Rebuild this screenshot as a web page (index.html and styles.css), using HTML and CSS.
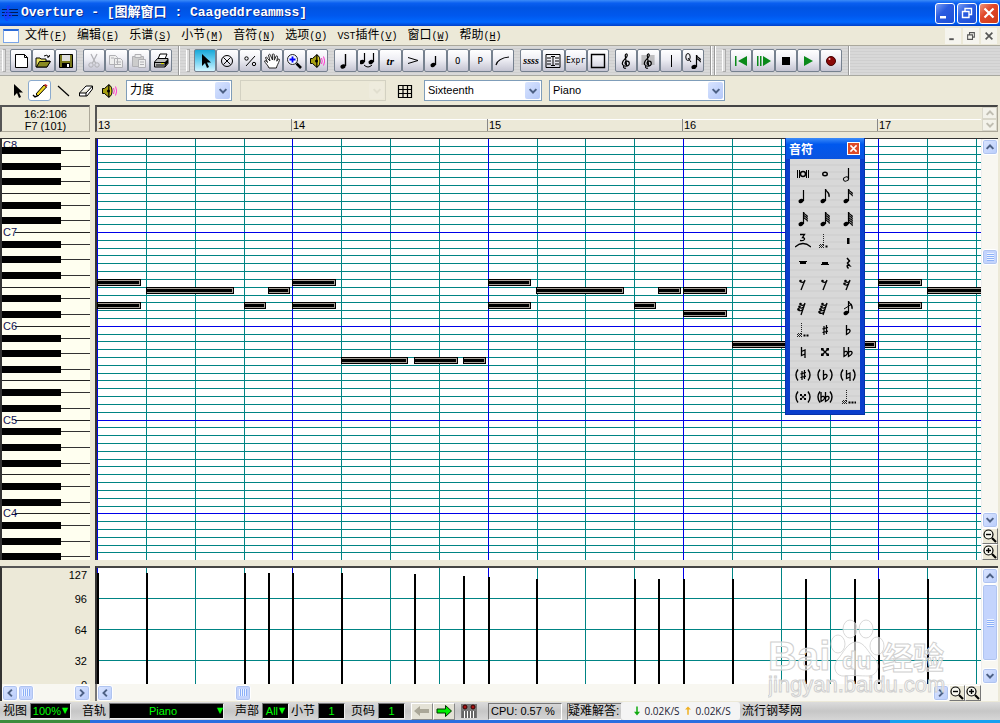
FILE: index.html
```html
<!DOCTYPE html>
<html lang="zh-CN">
	<head>
		<meta charset="utf-8">
		<title>Overture - [图解窗口 : Caageddreammss]</title>
		<link rel="stylesheet" href="styles.css">
	</head>
	<body>
		<header class="titlebar">
			<span class="icon" data-icon="app"></span>
			<h1>Overture - [图解窗口 : Caageddreammss]</h1>
			<button class="win" aria-label="最小化" data-icon="min"></button>
			<button class="win" aria-label="还原" data-icon="restore"></button>
			<button class="win close" aria-label="关闭" data-icon="close"></button>
		</header>

		<nav class="menubar">
			<span class="doc"></span>
			<a href="#">文件<span>(<u>F</u>)</span></a>
			<a href="#">编辑<span>(<u>E</u>)</span></a>
			<a href="#">乐谱<span>(<u>S</u>)</span></a>
			<a href="#">小节<span>(<u>M</u>)</span></a>
			<a href="#">音符<span>(<u>N</u>)</span></a>
			<a href="#">选项<span>(<u>O</u>)</span></a>
			<a href="#"><span>VST</span>插件<span>(<u>V</u>)</span></a>
			<a href="#">窗口<span>(<u>W</u>)</span></a>
			<a href="#">帮助<span>(<u>H</u>)</span></a>
			<div class="mdi">
				<button aria-label="最小化" data-icon="min"></button>
				<button aria-label="还原" data-icon="restore"></button>
				<button aria-label="关闭" data-icon="close"></button>
			</div>
		</nav>

		<div class="toolbar">
			<i class="grip"></i>
			<div class="group g3">
				<button data-icon="new"></button><button data-icon="open"></button><button data-icon="save"></button>
			</div>
			<div class="group g4">
				<button data-icon="cut" disabled></button><button data-icon="copy" disabled></button><button data-icon="paste" disabled></button><button data-icon="print"></button>
			</div>
			<i class="sep"></i>
			<i class="grip"></i>
			<div class="group g6">
				<button class="on" data-icon="arrow"></button><button data-icon="cross"></button><button data-icon="percent"></button><button data-icon="hand"></button><button data-icon="zoomblue"></button><button data-icon="speaker"></button>
			</div>
			<div class="group g8">
				<button data-icon="bignote"></button><button data-icon="tie"></button><button class="trill">tr</button><button data-icon="accent"></button><button data-icon="note"></button><button class="pix">O</button><button class="pix">P</button><button data-icon="slur"></button>
			</div>
			<div class="group g4">
				<button class="trill small">ssss</button><button data-icon="staff"></button><button class="pix tight">Expr</button><button data-icon="box"></button>
			</div>
			<div class="group g4">
				<button data-icon="clef"></button><button data-icon="clefgrid"></button><button data-icon="bar"></button><button data-icon="quant"></button>
			</div>
			<i class="sep"></i>
			<i class="sep"></i>
			<i class="grip"></i>
			<div class="group g5">
				<button data-icon="rewind"></button><button data-icon="stepplay"></button><button data-icon="stop"></button><button data-icon="play"></button><button data-icon="record"></button>
			</div>
			<i class="sep"></i>
		</div>

		<div class="tools">
			<button data-icon="arrow"></button>
			<button class="on" data-icon="pencil"></button>
			<button data-icon="line"></button>
			<button data-icon="eraser"></button>
			<button data-icon="speaker"></button>
			<label class="combo velocity"><select aria-label="参数"><option>力度</option></select><b data-icon="down"></b></label>
			<label class="combo empty"><select aria-label="控制器" disabled><option></option></select><b data-icon="down"></b></label>
			<button class="gridbtn" data-icon="grid"></button>
			<label class="combo snap"><select aria-label="网格"><option>Sixteenth</option></select><b data-icon="down"></b></label>
			<label class="combo track"><select aria-label="音轨"><option>Piano</option></select><b data-icon="down"></b></label>
		</div>

		<div class="row ruler">
			<div class="position">16:2:106<br>F7 (101)</div>
			<div class="measures">
				<svg id="ruler"></svg>
				<div class="spin"><button data-icon="up" disabled></button><button data-icon="down" disabled></button></div>
			</div>
		</div>

		<main class="row roll">
			<div class="keys"><svg id="keys"></svg></div>
			<div class="view">
				<svg id="notes"></svg>
				<div class="vscroll">
					<button data-icon="up"></button>
					<i class="thumb mid"></i>
					<button class="last" data-icon="down"></button>
					<button class="zoom" data-icon="zoomout"></button>
					<button class="zoom" data-icon="zoomin"></button>
				</div>
			</div>
			<section class="palette">
				<header><h2>音符</h2><button aria-label="关闭" data-icon="close"></button></header>
				<div class="symbols" id="symbols"></div>
			</section>
		</main>

		<div class="row velo">
			<div class="scale">
				<svg id="scale"></svg>
				<div class="hscroll">
					<button data-icon="left"></button>
					<i class="thumb"></i>
					<button class="last" data-icon="right"></button>
				</div>
			</div>
			<div class="lower">
				<div class="view">
					<svg id="velocity"></svg>
					<div class="vscroll">
						<button data-icon="up"></button>
						<i class="thumb tall"></i>
						<button class="last" data-icon="down"></button>
					</div>
				</div>
				<div class="hscroll">
					<button data-icon="left"></button>
					<i class="thumb mid"></i>
					<button class="last" data-icon="right"></button>
					<button class="zoom" data-icon="zoomout"></button>
					<button class="zoom" data-icon="zoomin"></button>
				</div>
			</div>
			<svg class="watermark" viewBox="0 0 184 90">
				<g>
					<ellipse cx="70" cy="29" rx="7" ry="9"/>
					<ellipse cx="82" cy="14" rx="7" ry="9"/>
					<ellipse cx="98" cy="14" rx="7" ry="9"/>
					<ellipse cx="109" cy="31" rx="7" ry="9"/>
					<path d="M88 27c9 0 12 11 19 17c6 7 2 17-7 17c-6 0-18-1-23 0c-9 1-13-8-8-16c6-6 10-18 19-18z"/>
				</g>
				<text class="logo" x="0" y="55">Bai</text>
				<text class="du" x="74" y="54">du</text>
				<text class="cn" x="114" y="54">经验</text>
				<text class="url" x="0" y="77">jingyan.baidu.com</text>
			</svg>
		</div>

		<footer class="status">
			<span class="name">视图</span>
			<button class="lcd w40">100%<b>▼</b></button>
			<span class="name pad">音轨</span>
			<button class="lcd w114"><span>Piano</span><b>▼</b></button>
			<span class="name pad">声部</span>
			<button class="lcd w26">All<b>▼</b></button>
			<span class="name">小节</span>
			<output class="lcd w26">1</output>
			<span class="name">页码</span>
			<output class="lcd w26">1</output>
			<button class="nav" data-icon="prev" disabled></button>
			<button class="nav" data-icon="next"></button>
			<span class="midi" data-icon="midi"></span>
			<span class="cell cpu">CPU: 0.57 %</span>
			<span class="cell help">疑难解答:</span>
			<span class="net"><i data-icon="netdown"></i>0.02K/S<i data-icon="netup"></i>0.02K/S</span>
			<span class="site">流行钢琴网</span>
		</footer>
		<div class="taskbar"></div>
		<script src="main.js"></script>
	</body>
</html>
```

FILE: styles.css
```css
*{
	box-sizing: border-box;
}
body{
	margin: 0;
	height: 100vh;
	overflow: hidden;
	display: flex;
	flex-direction: column;
	background: #ece9d8;
	color: #000;
	font: 11px/13px "Liberation Sans", "Noto Sans CJK SC", sans-serif;
}
button{
	display: flex;
	align-items: center;
	justify-content: center;
	margin: 0;
	padding: 0;
	border: 0;
	background: none;
	color: inherit;
	font: inherit;
}
svg{
	display: block;
	flex: none;
}

/* title and menu */
.titlebar{
	height: 26px;
	flex: none;
	display: flex;
	align-items: center;
	padding: 0 1px 0 2px;
	gap: 2px;
	background: linear-gradient(#3c8cf8 0, #0a5ff0 12%, #0054e3 30%, #0058ee 60%, #0068ff 85%, #003fc8 100%);
}
.titlebar h1{
	flex: 1;
	margin: 0 0 0 1px;
	color: #fff;
	font: bold 13px/20px "Liberation Mono", "Noto Sans CJK SC", monospace;
	text-shadow: 1px 1px 0 #0a2a90;
	white-space: pre;
}
.win{
	width: 20px;
	height: 21px;
	border: 1px solid #fff;
	border-radius: 3px;
	color: #fff;
	background: linear-gradient(135deg, #7a9df4, #2a5ce0 40%, #1c4ed6);
}
.win.close{
	background: linear-gradient(135deg, #f0957a, #e0482a 40%, #cf3a18);
}
.menubar{
	height: 19px;
	flex: none;
	display: flex;
	align-items: center;
	gap: 10px;
	padding: 0 3px;
}
.menubar a{
	color: #000;
	text-decoration: none;
	font: 12px/18px "Noto Sans CJK SC", sans-serif;
	white-space: nowrap;
}
.menubar a span{
	font: 10px/18px "Liberation Mono", monospace;
}
.doc{
	width: 16px;
	height: 14px;
	margin-right: -4px;
	background: #fff;
	border: 1px solid #7aa5e8;
	border-top: 2px solid #2a6ad8;
}
.mdi{
	margin-left: auto;
	display: flex;
	gap: 2px;
}
.mdi button{
	width: 16px;
	height: 16px;
	color: #555;
	background: #f5f4ee;
}

/* main toolbar */
.toolbar{
	height: 31px;
	flex: none;
	display: flex;
	align-items: center;
	padding: 0 4px 0 2px;
	border-top: 1px solid #aaa89c;
	border-bottom: 1px solid #a8a8a0;
	background: repeating-linear-gradient(#d8d8d8 0 2px, #cfcfcf 2px 3px);
}
.grip{
	width: 4px;
	height: 23px;
	margin-right: 4px;
	border: 1px solid #aaa;
	border-left-color: #fff;
	background: #ddd;
}
.sep{
	width: 2px;
	height: 29px;
	margin: 0 2px 0 0;
	border-left: 1px solid #999;
	background: #fff;
}
.sep + .grip{
	margin-left: 4px;
}
.group{
	height: 23px;
	flex: none;
	display: flex;
	margin-right: 6px;
}
.group button{
	flex: 1;
	min-width: 0;
	border: 1px solid #76818f;
	border-radius: 2px;
	background: linear-gradient(#fff, #eeeef4 45%, #c4c4d2);
}
.group button.on{
	background: linear-gradient(#18a8d8, #6cd0f0 50%, #d0f4ff);
}
.group button:disabled{
	color: #b0b0b4;
}
.g3{ width: 67px; }
.g4{ width: 89px; }
.g5{ width: 112px; }
.g6{ width: 134px; }
.g8{ width: 180px; }
.group .trill{
	font: italic bold 11px/12px "Liberation Serif", serif;
}
.group .small{
	font-size: 10px;
}
.group .pix{
	font: 9px/12px "DejaVu Sans Mono", monospace;
}
.group .tight{
	font: 8px/12px "DejaVu Sans Mono", monospace;
}

/* drawing tools */
.tools{
	height: 29px;
	flex: none;
	display: flex;
	align-items: center;
	padding-left: 5px;
}
.tools button{
	width: 23px;
	height: 21px;
}
.tools button.on{
	border: 1px solid #8aaace;
	border-radius: 3px;
	background: #fff;
}
.combo{
	display: grid;
	height: 21px;
	margin-left: 8px;
}
.combo select{
	grid-area: 1 / 1;
	appearance: none;
	border: 1px solid #7f9db9;
	border-radius: 0;
	background: #fff;
	color: #000;
	padding: 0 3px;
	font: 11px/17px "Liberation Sans", "Noto Sans CJK SC", sans-serif;
}
.combo b{
	grid-area: 1 / 1;
	justify-self: end;
	align-self: center;
	width: 15px;
	height: 17px;
	margin-right: 2px;
	display: flex;
	align-items: center;
	justify-content: center;
	color: #4d6185;
	background: linear-gradient(135deg, #d8e4ff, #b4c8f8);
	border-radius: 2px;
	pointer-events: none;
}
.velocity{
	width: 106px;
	margin-left: 6px;
}
.velocity select{ font-size: 12px; }
.empty{ width: 146px; }
.snap{ width: 118px; }
.track{
	width: 176px;
	margin-left: 7px;
}
.combo select:disabled{
	background: #ece9d8;
	border-color: #c9c7ba;
}
.empty b{
	color: #c9c7ba;
	background: #f3f2ea;
}
.tools .gridbtn{
	margin: 0 0 0 7px;
}

/* panes */
.row{
	flex: none;
	display: grid;
	grid-template: minmax(0, 1fr) / 90px minmax(0, 1fr);
	gap: 5px;
	padding-right: 2px;
	margin-bottom: 6px;
}
.row text{
	font: 11px "Liberation Sans", sans-serif;
}
.ruler{
	height: 27px;
}
.position{
	padding: 1px 0;
	border: 1px solid #aca899;
	border-top: 2px solid #555;
	border-left: 2px solid #555;
	text-align: center;
	line-height: 12px;
}
.measures{
	display: flex;
	border: 1px solid #aca899;
	border-top: 2px solid #444;
	border-left: 2px solid #555;
}
.measures svg#ruler{
	flex: 1;
	min-width: 0;
	height: 24px;
}
.spin button{
	width: 15px;
	height: 12px;
	color: #c0beb2;
	background: #f3f2ea;
	border: 1px solid #d9d7ca;
}
.roll{
	flex: 1;
	min-height: 0;
	position: relative;
}
.keys, .view{
	min-height: 0;
	overflow: hidden;
	border-left: 2px solid #333;
	border-top: 1px solid #333;
}
.keys{
	background: #fffff0;
}
.view{
	display: flex;
	background: #fff;
}
.view > svg{
	flex: 1;
	min-width: 0;
	height: 100%;
}
.keys svg{
	width: 100%;
	height: 100%;
}
.keys text{
	fill: #101050;
}

/* scroll bars */
.vscroll, .hscroll{
	flex: none;
	display: flex;
	background: #f8f7f1;
}
.vscroll{
	width: 17px;
	flex-direction: column;
	border-left: 1px solid #eee;
}
.hscroll{
	height: 17px;
	align-items: center;
}
.vscroll button, .hscroll button, .thumb{
	flex: none;
	width: 16px;
	height: 16px;
	color: #4d6185;
	border: 1px solid #fff;
	border-radius: 3px;
	background: linear-gradient(135deg, #dce6ff, #b8ccfb);
	box-shadow: inset 0 0 0 1px #b0c4f0;
}
.thumb{
	background: repeating-linear-gradient(90deg, #eef4ff 0 1px, #8cb0f8 1px 2px) center / 8px 7px no-repeat, #c4d4fd;
}
.vscroll .thumb{
	background: repeating-linear-gradient(#eef4ff 0 1px, #8cb0f8 1px 2px) center / 7px 8px no-repeat, #c4d4fd;
}
.vscroll .mid{
	margin-top: 94px;
}
.hscroll .mid{
	margin-left: 122px;
}
.vscroll .tall{
	height: 77px;
}
.vscroll .last{
	margin-top: auto;
}
.hscroll .last{
	margin-left: auto;
}
.vscroll .zoom, .hscroll .zoom{
	color: #000;
	border: 1px solid #fff;
	border-right-color: #777;
	border-bottom-color: #777;
	border-radius: 0;
	box-shadow: none;
	background: #ece9d8;
}

/* velocity lane */
.velo{
	height: 135px;
	margin-bottom: 1px;
	position: relative;
}
.scale, .lower{
	display: flex;
	flex-direction: column;
	min-width: 0;
	min-height: 0;
}
.scale{
	border-left: 2px solid #333;
	border-top: 2px solid #555;
}
.scale svg#scale{
	width: 100%;
	flex: 1;
	min-height: 0;
}
.lower .view{
	flex: 1;
	border-top: 2px solid #444;
}
.lower .hscroll{
	border-left: 2px solid #777;
	padding-right: 17px;
}
.watermark{
	position: absolute;
	right: 48px;
	top: 49px;
	width: 184px;
	height: 90px;
	pointer-events: none;
}
.watermark *{
	fill: #fff;
	fill-opacity: .65;
	stroke: #d0d0d0;
	stroke-width: 1px;
}
.watermark g{
	stroke-opacity: .8;
	fill-opacity: .6;
}
.watermark .logo{
	font: bold 40px "Liberation Sans", sans-serif;
}
.watermark .du{
	font: bold 24px "Liberation Sans", sans-serif;
}
.watermark .cn{
	font: bold 31px "Noto Sans CJK SC", sans-serif;
}
.watermark .url{
	font: 22px "Liberation Sans", sans-serif;
}

/* floating symbol palette */
.palette{
	position: absolute;
	top: 0;
	right: 135px;
	width: 80px;
	padding: 0 4px 4px;
	background: #0a3ecb;
	border: 1px solid #0832a8;
	border-top: 0;
}
.palette header{
	height: 21px;
	margin: 0 -4px;
	padding: 0 4px 0 3px;
	display: flex;
	align-items: center;
	justify-content: space-between;
	background: linear-gradient(#3c8cf8, #0058ee 30%, #0a54e0);
}
.palette h2{
	margin: 0;
	color: #fff;
	font: bold 12px/18px "Noto Sans CJK SC", sans-serif;
}
.palette header button{
	width: 13px;
	height: 13px;
	color: #fff;
	background: #dd4a28;
	border: 1px solid #fff;
}
.palette header svg{
	width: 11px;
	height: 11px;
}
.symbols{
	height: 251px;
	padding: 4px 1px 2px 2px;
	display: grid;
	grid-template: repeat(11, 1fr) / repeat(3, 1fr);
	background: repeating-linear-gradient(#d8d8d8 0 5px, #d2d2d2 5px 7px);
}

/* status bar */
.status{
	height: 18px;
	flex: none;
	display: flex;
	align-items: center;
	background: linear-gradient(#dcdcdc, #c6c6c6 50%, #d6d6d6);
	white-space: nowrap;
	padding-left: 3px;
}
.name{
	margin-right: 3px;
	font-size: 12px;
	line-height: 16px;
}
.name.pad{
	margin-left: 9px;
}
.lcd{
	height: 16px;
	display: flex;
	align-items: center;
	justify-content: center;
	gap: 1px;
	background: #000;
	color: #0f0;
	border: 1px solid #777;
	border-right-color: #eee;
	border-bottom-color: #eee;
	margin-right: 2px;
}
.lcd b{
	font: 8px/10px "DejaVu Sans", sans-serif;
}
.lcd span{
	flex: 1;
}
.w40{ width: 41px; }
.w114{ width: 115px; }
.w26{ width: 27px; }
output.lcd{
	margin-right: 6px;
}
.nav{
	width: 22px;
	height: 17px;
	border: 1px solid #fff;
	border-right-color: #888;
	border-bottom-color: #888;
	background: #e4e2d6;
}
.midi{
	margin: 0 11px 0 6px;
}
.cell{
	height: 17px;
	padding: 0 2px;
	line-height: 15px;
	border: 1px solid #777;
	border-right-color: #fff;
	border-bottom-color: #fff;
}
.cpu{
	width: 74px;
	margin-right: 5px;
}
.help{
	width: 54px;
	padding: 0;
	font-size: 12px;
	border-right: 0;
}
.net{
	height: 18px;
	width: 119px;
	display: flex;
	align-items: center;
	justify-content: center;
	gap: 2px;
	background: #f4f4f4;
	border-radius: 3px;
	color: #223;
	font: 10px/16px "Open Sans", sans-serif;
}
.site{
	margin-left: 2px;
	font-size: 12px;
}
.taskbar{
	height: 3px;
	flex: none;
	background: linear-gradient(90deg, #3c8c3c 90px, #2a6ee0 90px 890px, #18a0f0 890px);
}
```

FILE: main.js
```js
// small music glyph helpers, drawn in a 16x16 box
function head(x, y, open)
{
	return '<ellipse cx="' + x + '" cy="' + y + '" rx="2.6" ry="2" transform="rotate(-20 ' + x + ' ' + y + ')" ' + (open ? 'fill="none" stroke="currentColor"' : '') + '/>';
}
function line(d, w)
{
	return '<path d="' + d + '" fill="none" stroke="currentColor" stroke-width="' + (w || 1) + '"/>';
}
function note(flags, open)
{
	var s = head(6, 13, open) + line("M8.5 13V" + (flags ? 1 : 2), 1.2);
	for (var i = 0; i < flags; i++)
	{
		var y = 1 + i * 2.2;
		s += line("M8.5 " + y + "c0 3 5 3 3.5 " + (flags > 1 ? 5 : 8), 1.2);
	}
	return s;
}
function dotted(n)
{
	var s = '<path d="M6.5 1v11" stroke="#222" stroke-dasharray="1 1"/><path d="M2 12.5h5M2 14.5h5M3 13.5h4M3 11.5h4" stroke="#222" stroke-dasharray="1 1"/>';
	for (var i = 0; i < n; i++)
	{
		s += '<rect x="' + (8.5 + i * 3) + '" y="12.5" width="2" height="2"/>';
	}
	return s;
}
function rest(n)
{
	var s = line("M10 3L6 " + (n > 2 ? 15 : 13), 1.3);
	for (var i = 0; i < n; i++)
	{
		var x = 9.5 - i, y = 4 + i * 2.7;
		s += '<circle cx="' + (x - 4) + '" cy="' + y + '" r="1.3"/>' + line("M" + (x - 4) + " " + (y + 1) + "q3 1 4.4-1", 1.2);
	}
	return s;
}
var sharp = line("M7 4v9M9.5 3v9M5.5 6.8l5.5-1.3M5.5 10.5l5.5-1.3", 1.2);
var flat = line("M6.5 3v9.5c2-1 4-2.5 3.5-4.2c-.6-1.4-2.6-1-3.5.4", 1.3);
var natural = line("M6.5 3v8.5l3.5-1.5M10 14V6L6.5 7.5", 1.3);
var dsharp = line("M5 5l6 6M11 5l-6 6", 1.4) + '<path d="M4 4h2.6v2.6H4zM9.4 4H12v2.6H9.4zM4 9.4h2.6V12H4zM9.4 9.4H12V12H9.4z"/>';
var dflat = '<g transform="translate(-2.5 0)">' + flat + '</g><g transform="translate(2 0)">' + flat + '</g>';
var parens = line("M3 2.5q-4 5.5 0 11M13 2.5q4 5.5 0 11", 1.4);
var clef = line("M8 15c-2 1-3-1-2-2M8.8 13.5L7.3 3c-.3-2 2-3 2-.8c0 3-5 4.600-5 8c0 4 7 3.500 7 .3c0-3-4-3-4.300-.5c0 1 .5 1.500 1 1.600", 1.2);
var lens = function(sign) {
	return '<circle cx="6.500" cy="6.500" r="4.500" fill="#f8f8f0" stroke="currentColor" stroke-width="1.200"/>' + line("M10 10l4 4", 2.200) + line(sign, 1.400);
};

var icons = {
	app: '<g stroke="#001858" fill="none"><path d="M0 4.500h16M0 7.500h16M0 10.500h16"/></g><g color="#1a3cff" transform="translate(-2 0)">' + clef + '</g>',
	min: '<path d="M3 11h6v2.500H3z"/>',
	restore: '<path d="M6 6V3.500h6.500v6H10.500M3.500 6.500h6.500v6H3.500z" fill="none" stroke="currentColor" stroke-width="1.400"/>',
	close: line("M3.500 3.500l9 9M12.500 3.500l-9 9", 2.200),
	"new": '<path d="M2.500 1.500h9l3 3v10h-12z" fill="#fff" stroke="#000"/>' + line("M11.500 1.500v3h3"),
	open: '<path d="M1 14V5h4l1 1h5v2h4l-3 6z" fill="#e8e060" stroke="#000"/><path d="M1.500 14l3-5.500h11L12 14z" fill="#8a8a20" stroke="#000"/>' + line("M9 3q3-2 5 1l.5-2M14 4h-2"),
	save: '<path d="M1.500 1.500h13v13h-13z" fill="#77771a" stroke="#000"/><path d="M4 2h8v6H4z" fill="#ddd"/><path d="M4 10h8v5H4z"/><path d="M9 11h2v3H9z" fill="#fff"/>',
	cut: line("M5 1l4.500 9M11 1L6.500 10", 1.200) + '<circle cx="5" cy="12" r="2.200" fill="none" stroke="currentColor"/><circle cx="11" cy="12" r="2.200" fill="none" stroke="currentColor"/>',
	copy: '<path d="M1.500 2.500h6l2 2v7h-8zM6.500 5.500h6l2 2v7h-8z" fill="#eee" stroke="currentColor"/>' + line("M8 9h5M8 11.500h5M3 5h3"),
	paste: '<path d="M1.500 3.500h11v10h-11z" fill="#ccc" stroke="currentColor"/><path d="M4 1.500h6v3H4zM7.500 6.500h7v8h-7z" fill="#eee" stroke="currentColor"/>' + line("M9 9h4M9 11.500h4"),
	print: '<path d="M5 6l2-5h7l-2 5z" fill="#fff" stroke="#000"/><path d="M1.500 9l3-3.500h10.500v5L12 14H1.500z" fill="#bbb" stroke="#000"/><path d="M2 9.500h10V14M3 12h8" stroke="#000" fill="none"/><path d="M12 9l3-3v4l-3 3z"/><path d="M8 10.500h3" stroke="#dd0"/>',
	arrow: '<path d="M5 1v12l3-3l2 5l2-1l-2-4.500h4z"/>',
	cross: '<circle cx="8" cy="8" r="5.500" fill="none" stroke="currentColor"/>' + line("M4.500 4.500l7 7M11.500 4.500l-7 7"),
	percent: line("M13 3L4 13") + '<circle cx="4.500" cy="5.500" r="1.700" fill="none" stroke="currentColor"/><circle cx="12" cy="11" r="1.700" fill="none" stroke="currentColor"/>',
	hand: '<path d="M5 15c-1-3-4-5-4.500-7c1-1 2 0 3 1.500L1.500 4.500c1-1 2 0 2 1L6 8L4.500 2c1-1.500 2-.5 2 .5L8.500 7l-.2-5.500c1-1.300 2-.3 2 .7v5l1.700-4c1-.8 1.700 0 1.500 1l-.7 4l1.200-2c1.500-.6 1.800.5 1.300 1.500c-1 3-2 4-3 7.300z" fill="#fff" stroke="#222"/>',
	zoomblue: '<circle cx="6.500" cy="6.500" r="5" fill="#f4f8ff" stroke="#222"/>' + line("M10.500 10.500l4.500 4.500", 2.600) + '<path d="M6.500 3.500v6M3.500 6.500h6" stroke="#00f" stroke-width="1.800"/>',
	speaker: '<path d="M1.500 5.500h2L8 1.500v13L3.500 10.500h-2z" fill="#a8a010" stroke="#000"/><path d="M8 2c4 1 4 11 0 12z" fill="#dcd020" stroke="#000"/><circle cx="7.500" cy="8" r="1.500"/><path d="M12.500 5q1.500 3 0 6M14.500 3.500q2.500 4.500 0 9" fill="none" stroke="#f3c"/>',
	bignote: head(6, 13.5) + line("M8.500 13V1", 1.400),
	note: head(6, 12) + line("M8.500 12V3", 1.300),
	tie: '<g transform="translate(-4 -3)">' + head(6, 12) + line("M8.500 12V3", 1.200) + '</g><g transform="translate(5 -3)">' + head(6, 12) + line("M8.500 12V3", 1.200) + '</g>' + line("M4 12q4 4 8 0"),
	accent: line("M3 4.500l10 3l-10 3"),
	slur: line("M1 12q2-7 13-8", 1.200),
	staff: line("M1 1.500h14v13H1zM2 5h4M10 5h4M2 8h4M10 8h4M2 11h4M10 11h4M8 3v10M6 3.500h4M6 12.500h4"),
	box: line("M1.500 1.500h13v13h-13z", 1.400),
	clef: clef,
	clefgrid: '<path d="M1 3h14M1 5h14M1 7h14M1 9h14M1 11h14M3 2v10M5 2v10M11 2v10M13 2v10" stroke="#999" stroke-width=".7"/>' + clef,
	bar: line("M8.500 2v12"),
	quant: '<ellipse cx="3" cy="4" rx="2.200" ry="3.500" fill="none" stroke="currentColor"/>' + line("M3 5l3 4") + '<g transform="translate(3 1)">' + note(2) + '</g>',
	rewind: '<path d="M2 3h1.500v10H2zM14 3v10L5 8z" fill="#0a8a1a"/>',
	stepplay: '<path d="M1 3h1.500v10H1zM4 3h1.500v10H4zM7 3v10l8-5z" fill="#0a8a1a"/>',
	stop: '<path d="M4 4h8v8H4z"/>',
	play: '<path d="M4 3v10l9-5z" fill="#0a8a1a"/>',
	record: '<circle cx="8" cy="8" r="4.500" fill="#8a0808" stroke="#400"/><circle cx="6.500" cy="6" r="1" fill="#fcc"/>',
	pencil: '<path d="M4 11L12 2l2.500 2L6 13z" fill="#f0d820" stroke="#000"/><path d="M12 2l2.500 2L15.500 2.500L13.500 1z" fill="#c22"/>' + line("M1 12l2 2l3-1.500", 1.400),
	line: line("M3 3l11 10", 1.200),
	eraser: '<path d="M1.500 10L8 3h6.500v3L9 13H1.500zM1.500 10H8l6.500-7M8 10v3" fill="#fff" stroke="#000"/>',
	grid: line("M1.500 2.500h13v12h-13zM1.500 6.500h13M1.500 10.500h13M6 2.500v12M10.500 2.500v12", 1.200),
	down: line("M3.500 5.500L8 10L12.500 5.500", 2.600),
	up: line("M3.500 10.500L8 6L12.500 10.500", 2.600),
	left: line("M10.500 3.500L6 8L10.500 12.500", 2.600),
	right: line("M5.500 3.500L10 8L5.500 12.500", 2.600),
	zoomout: lens("M4 6.500h5"),
	zoomin: lens("M4 6.500h5M6.500 4v5"),
	prev: '<path d="M0 8l6-5v3h9v4H6v3z" fill="#aaa798"/>',
	next: '<path d="M15.500 8L9.500 2.500V6H1v4h8.500v3.500z" fill="#0e0" stroke="#030"/>',
	midi: '<path d="M0 1h16v14H0z" fill="#777"/><circle cx="4" cy="4" r="2" fill="#a11" stroke="#300"/><circle cx="12" cy="4" r="2" fill="#a11" stroke="#300"/><path d="M1 8h14v7H1z" fill="#fff"/>' + line("M2 8v7M5 8v7M8 8v7M11 8v7M14 8v7", 1.200),
	netdown: '<path d="M7 2h2v7h3l-4 5l-4-5h3z" fill="#1a1"/>',
	netup: '<path d="M7 13h2V6h3L8 2L4 6h3z" fill="#f0b020"/>'
};

var symbols = [
	'<ellipse cx="8" cy="8" rx="2.500" ry="2.500" fill="none" stroke="currentColor" stroke-width="1.400"/>' + line("M2.500 4v8M4.500 4v8M11.500 4v8M13.500 4v8"),
	'<ellipse cx="8" cy="8" rx="2.300" ry="1.800" fill="none" stroke="currentColor" stroke-width="1.400"/>',
	note(0, true), note(0), note(1), note(2), note(3), note(4), note(5),
	line("M0 14q8-7 16 0M5 1.500h4.500L7.500 4.500c3 0 3 4-2.500 3", 1.300), dotted(1), '<path d="M7 5h2.500v6H7z"/>',
	'<path d="M4 6h8v1h-1v2H5V7H4z"/>', '<path d="M4 10h8V9h-1V7H5v2H4z"/>',
	line("M7 3l2.500 3L7.500 8L9.500 10.500c-3-1-3 1-1 3", 1.500),
	rest(1), rest(1), rest(2), rest(3), rest(4),
	note(1) + line("M4 9l8-5"), dotted(2), sharp, flat, natural, dsharp, dflat,
	sharp + parens, flat + parens, natural + parens,
	'<g transform="translate(2 2) scale(.75)">' + dsharp + '</g>' + parens, dflat + parens, dotted(3)
];

function icon(body, size)
{
	return '<svg width="' + size + '" height="' + size + '" viewBox="0 0 16 16" fill="currentColor">' + body + '</svg>';
}
document.querySelectorAll("[data-icon]").forEach(function(el) {
	var small = el.closest(".mdi, .vscroll, .hscroll, .combo, .spin, .net") && !el.classList.contains("zoom");
	el.innerHTML = icon(icons[el.dataset.icon], small ? 12 : 16);
});
document.getElementById("symbols").innerHTML = symbols.map(function(s) {
	return "<button>" + icon(s, 16) + "</button>";
}).join("");

// piano roll
var BEAT = 48.84;
var ROW = 7.815;
var C7 = 93;
var TEAL = "#008484";
var BLUE = "#0000e8";
var pane = document.getElementById("notes").getBoundingClientRect();

function rect(x, y, w, h, color)
{
	return '<rect x="' + Math.round(x) + '" y="' + Math.round(y) + '" width="' + Math.round(w) + '" height="' + Math.round(h) + '" fill="' + color + '"/>';
}
function text(x, y, s, anchor)
{
	return '<text x="' + x + '" y="' + y + '" text-anchor="' + (anchor || "start") + '">' + s + '</text>';
}
function beats()
{
	var s = "";
	for (var i = 0; i * BEAT < pane.width; i++)
	{
		s += rect(i * BEAT, 0, 1, pane.height, i % 4 ? TEAL : BLUE);
	}
	return s;
}

var out = "";
var rows = (pane.height - C7) / ROW;
for (var r = -11; r < rows; r++)
{
	if (r % 12) out += rect(0, C7 + r * ROW, pane.width, 1, TEAL);
}
out += beats();
for (r = 0; r < rows; r += 12)
{
	out += rect(0, C7 + r * ROW, pane.width, 1, BLUE);
}
// start, length, row below C7
var notes = [
	[0, 44, 6], [49, 88, 7], [0, 44, 9], [147, 22, 9], [171, 22, 7],
	[195, 44, 6], [195, 44, 9], [244, 67, 16], [317, 44, 16], [366, 23, 16],
	[391, 43, 6], [391, 43, 9], [439, 88, 7], [537, 22, 9], [561, 23, 7],
	[586, 44, 7], [586, 44, 10], [635, 68, 14], [708, 71, 14],
	[781, 44, 6], [781, 44, 9], [830, 88, 7]
];
notes.forEach(function(n) {
	var y = C7 + n[2] * ROW;
	out += rect(n[0], y, n[1], 7, "#000") + rect(n[0] + 1, y + 1, n[1] - 2, 5, "#a8a098") + rect(n[0] + 1, y + 2, n[1] - 3, 3, "#000");
});
document.getElementById("notes").innerHTML = out;

// keyboard
out = text(1, 10, "C8");
for (var o = -1; o * 12 < rows; o++)
{
	var keyTop = C7 + o * 12 * ROW;
	if (o >= 0) out += rect(13, keyTop, 90, 1, "#222") + text(1, Math.round(keyTop) + 4, "C" + (7 - o));
	out += rect(0, keyTop + 7 * ROW, 90, 1, "#222");
	[1.5, 3.5, 5.5, 8.5, 10.5].forEach(function(k) {
		out += rect(0, keyTop + k * ROW, 90, 1, "#333") + rect(0, keyTop + k * ROW - 3, 59, 7, "#000");
	});
}
document.getElementById("keys").innerHTML = out;

// ruler
out = rect(0, 12, pane.width, 1, "#fff");
for (var m = 0; m * 4 * BEAT < pane.width; m++)
{
	out += rect(m * 4 * BEAT - 1, 12, 1, 12, "#888") + text(Math.round(m * 4 * BEAT) + 1, 22, 13 + m);
}
document.getElementById("ruler").innerHTML = out;

// velocities
out = "";
[30, 61, 92].forEach(function(y) {
	out += rect(0, y, pane.width, 1, TEAL);
});
out += beats();
[[0, 5], [49, 5], [147, 5], [171, 5], [195, 5], [244, 5], [317, 6], [366, 8], [391, 9], [439, 11], [537, 11], [561, 11], [586, 11], [635, 11], [708, 11], [757, 11], [781, 11], [830, 11]].forEach(function(v) {
	out += rect(v[0], v[1], 2, 200, "#000");
});
document.getElementById("velocity").innerHTML = out;
document.getElementById("scale").innerHTML = text(85, 11, 127, "end") + text(85, 35, 96, "end") + text(85, 66, 64, "end") + text(85, 97, 32, "end") + text(85, 121, 0, "end");
```
